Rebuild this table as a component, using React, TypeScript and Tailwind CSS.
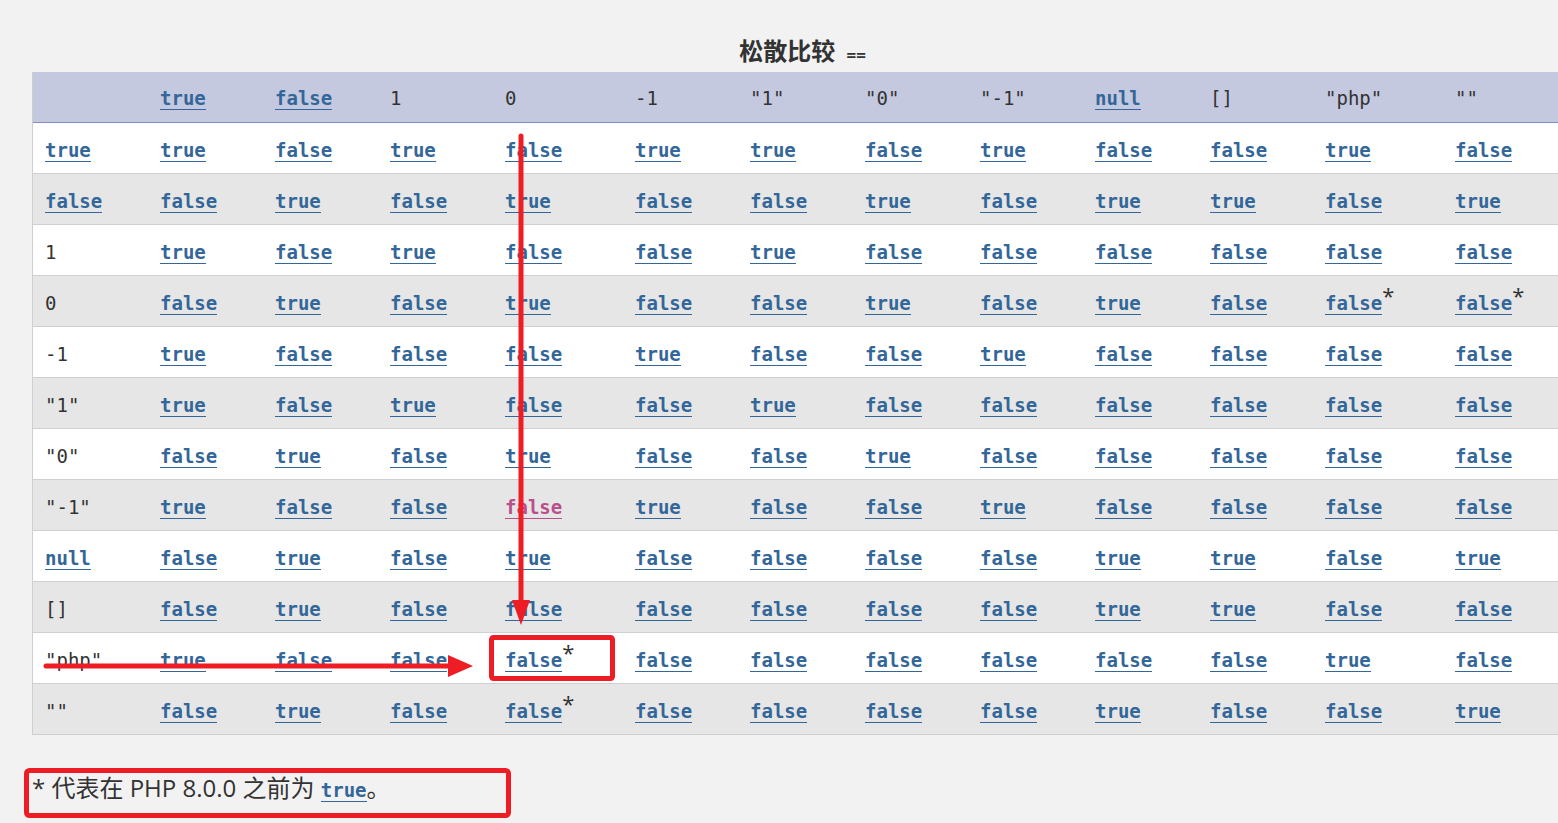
import React from 'react';

type Cell = string;

const mono = "font-['DejaVu_Sans_Mono','Liberation_Mono',monospace]";

const headers: Cell[] = ['', 'true', 'false', '1', '0', '-1', '"1"', '"0"', '"-1"', 'null', '[]', '"php"', '""'];
const widths = [115, 115, 115, 115, 130, 115, 115, 115, 115, 115, 115, 130, 130];

// "!" marks the pink (visited) link, "*" the footnote
const rows: Cell[][] = [
  ['true', 'true', 'false', 'true', 'false', 'true', 'true', 'false', 'true', 'false', 'false', 'true', 'false'],
  ['false', 'false', 'true', 'false', 'true', 'false', 'false', 'true', 'false', 'true', 'true', 'false', 'true'],
  ['1', 'true', 'false', 'true', 'false', 'false', 'true', 'false', 'false', 'false', 'false', 'false', 'false'],
  ['0', 'false', 'true', 'false', 'true', 'false', 'false', 'true', 'false', 'true', 'false', 'false*', 'false*'],
  ['-1', 'true', 'false', 'false', 'false', 'true', 'false', 'false', 'true', 'false', 'false', 'false', 'false'],
  ['"1"', 'true', 'false', 'true', 'false', 'false', 'true', 'false', 'false', 'false', 'false', 'false', 'false'],
  ['"0"', 'false', 'true', 'false', 'true', 'false', 'false', 'true', 'false', 'false', 'false', 'false', 'false'],
  ['"-1"', 'true', 'false', 'false', 'false!', 'true', 'false', 'false', 'true', 'false', 'false', 'false', 'false'],
  ['null', 'false', 'true', 'false', 'true', 'false', 'false', 'false', 'false', 'true', 'true', 'false', 'true'],
  ['[]', 'false', 'true', 'false', 'false', 'false', 'false', 'false', 'false', 'true', 'true', 'false', 'false'],
  ['"php"', 'true', 'false', 'false', 'false*', 'false', 'false', 'false', 'false', 'false', 'false', 'true', 'false'],
  ['""', 'false', 'true', 'false', 'false*', 'false', 'false', 'false', 'false', 'true', 'false', 'false', 'true'],
];

const isLink = (v: string) => /^(true|false|null)/.test(v);

function Value({ v }: { v: string }) {
  if (!isLink(v)) return <span className="text-[#333]">{v}</span>;
  const star = v.endsWith('*');
  const pink = v.endsWith('!');
  const word = v.replace(/[*!]$/, '');
  return (
    <>
      <a
        className={
          pink
            ? 'font-bold text-[#b9508c] border-b border-[#b9508c]'
            : 'font-bold text-[#336699] border-b border-[#336699]'
        }
      >
        {word}
      </a>
      {star && (
        <span className="relative -top-[6px] font-['Open_Sans',sans-serif] text-[22px] leading-[0] text-[#333]">*</span>
      )}
    </>
  );
}

function Annotations() {
  return (
    <svg className="pointer-events-none absolute left-0 top-0" width="1558" height="823">
      <g fill="none" stroke="#ee1c25" strokeLinecap="round">
        <line x1="521" y1="136" x2="521" y2="604" strokeWidth="5" />
        <line x1="46" y1="666" x2="452" y2="666" strokeWidth="5" />
        <rect x="491.5" y="637.5" width="121" height="41" rx="2" strokeWidth="5" />
        <rect x="26.5" y="770.5" width="482" height="45" rx="3" strokeWidth="5" />
      </g>
      <polygon points="512,600 530,600 521,625" fill="#ee1c25" />
      <polygon points="448,655 448,677 473,666" fill="#ee1c25" />
    </svg>
  );
}

export default function App() {
  return (
    <div className="relative h-[823px] w-full overflow-hidden bg-[#f2f2f2] font-['Open_Sans','Noto_Sans_CJK_SC',sans-serif]">
      <div className="pl-[32px]">
        <table className={`table-fixed border-separate border-spacing-0 border-l border-[#cfcfcf] w-[1541px] ${mono} text-[19px]`}>
          <caption className="h-[72px] pt-[34px] text-center leading-[32px] text-[#333]">
            <span className="font-['Noto_Sans_CJK_SC',sans-serif] text-[24px] font-bold">松散比较</span>{' '}
            <span className={`${mono} text-[16px] font-bold`}>==</span>
          </caption>
          <colgroup>
            {widths.map((w, i) => (
              <col key={i} style={{ width: w }} />
            ))}
          </colgroup>
          <thead>
            <tr>
              {headers.map((h, i) => (
                <th
                  key={i}
                  className="h-[51px] border-b border-[#7f90c6] bg-[#c4c9df] pl-[12px] pt-[2px] text-left align-middle font-normal"
                >
                  {h && <Value v={h} />}
                </th>
              ))}
            </tr>
          </thead>
          <tbody>
            {rows.map((r, ri) => (
              <tr key={ri} className={ri % 2 === 1 ? 'bg-[#e6e6e6]' : 'bg-white'}>
                {r.map((c, ci) => (
                  <td key={ci} className="h-[51px] border-b border-[#cfcfcf] pl-[12px] pt-[4px] align-middle whitespace-nowrap">
                    <Value v={c} />
                  </td>
                ))}
              </tr>
            ))}
          </tbody>
        </table>
      </div>
      <p className="mt-[38px] pl-[32px] text-[24px] leading-[30px] text-[#333]">
        * 代表在 PHP 8.0.0 之前为{' '}
        <a className={`${mono} text-[19px] font-bold text-[#336699] border-b border-[#336699]`}>true</a>。
      </p>
      <Annotations />
    </div>
  );
}
